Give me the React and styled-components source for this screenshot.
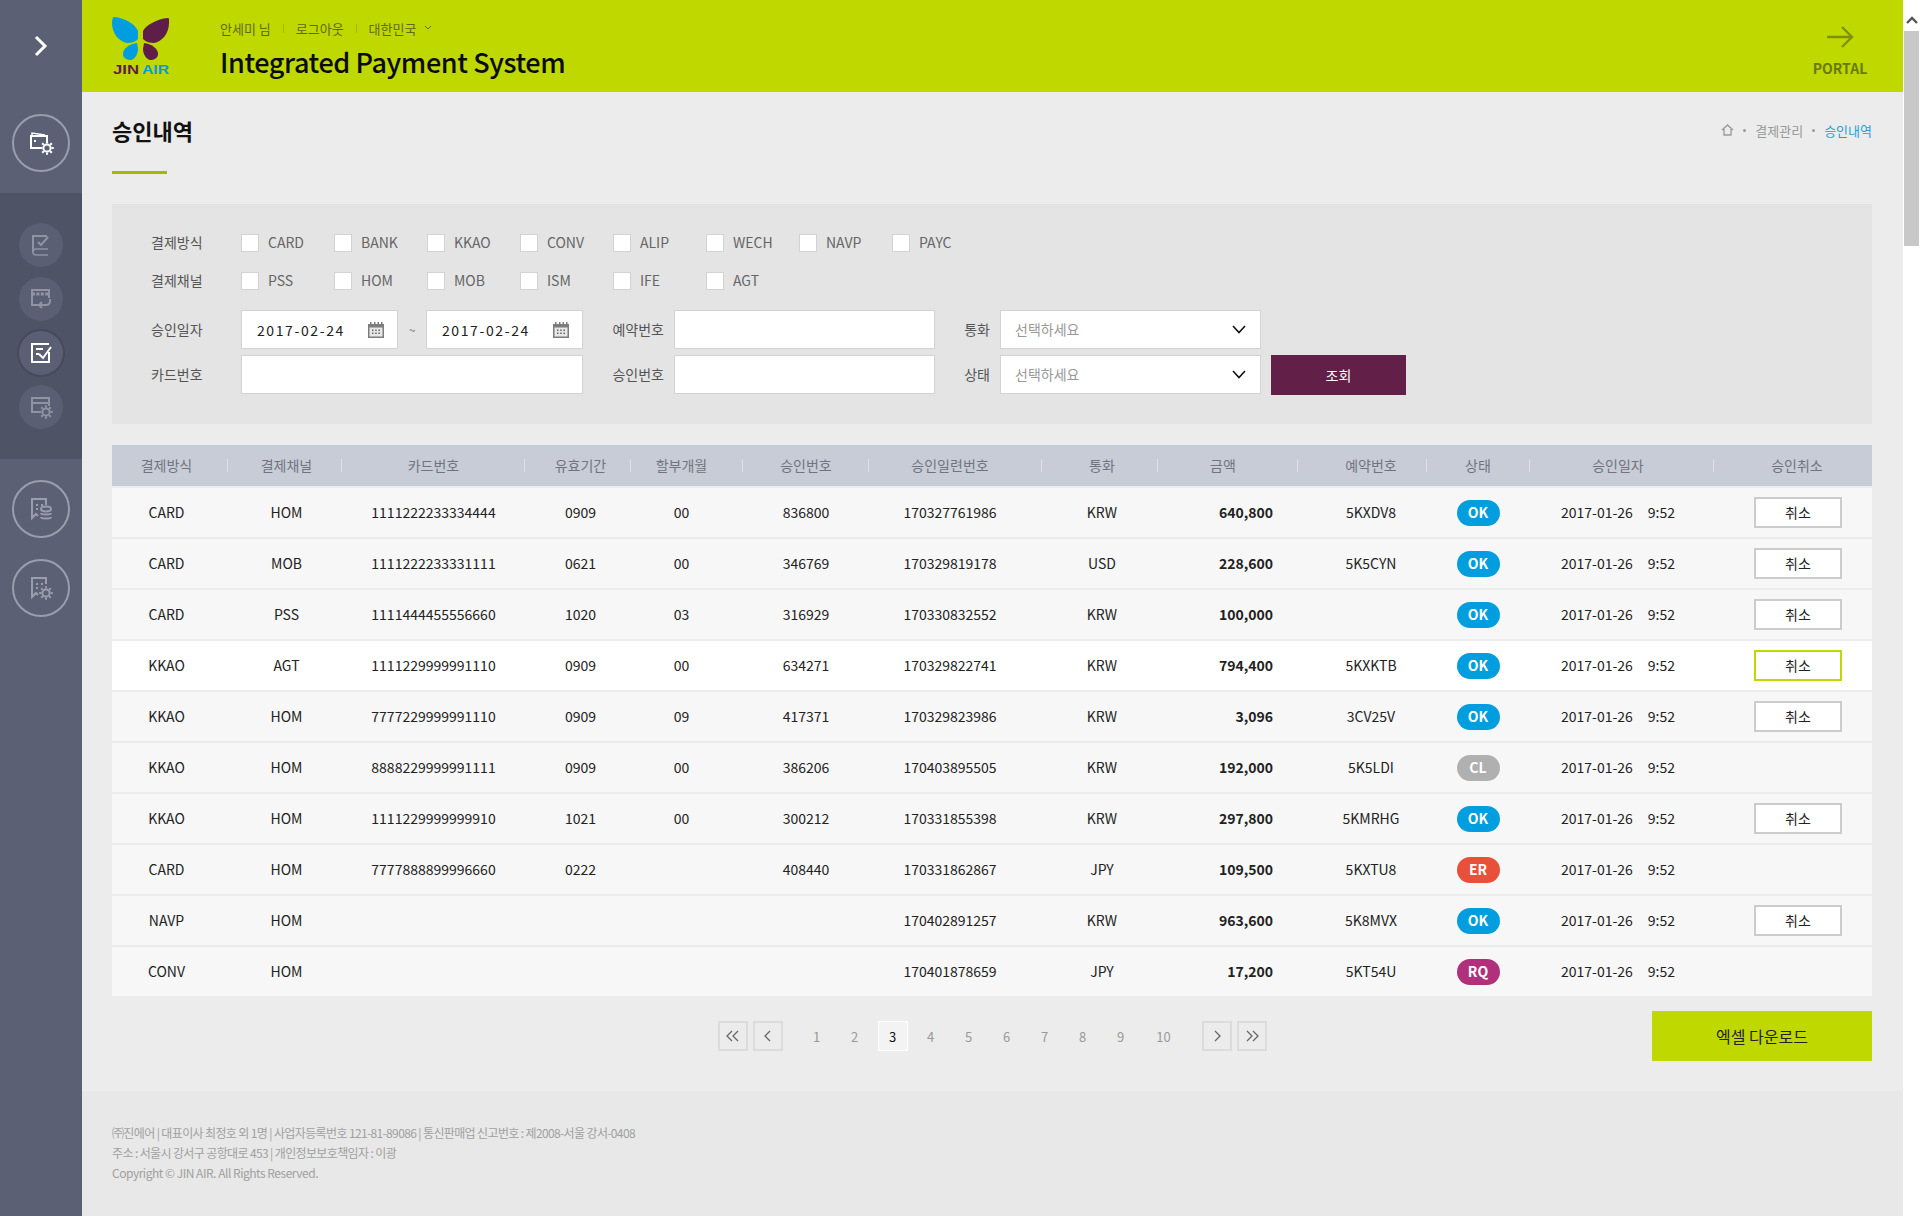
import React from 'react';
import styled, { createGlobalStyle } from 'styled-components';

const GlobalStyle = createGlobalStyle`
  html, body {
    margin: 0;
    padding: 0;
    background: #ececec;
    overflow: hidden;
  }
  * {
    box-sizing: border-box;
  }
  body {
    font-family: "Noto Sans CJK KR", "Noto Sans", sans-serif;
    font-size: 14px;
    color: #222;
  }
`;

const Page = styled.div`
  display: flex;
  width: 1920px;
  height: 1216px;
  overflow: hidden;
`;

/* sidebar */
const Sidebar = styled.aside`
  flex: 0 0 82px;
  display: flex;
  flex-direction: column;
  background: #5b6074;
`;
const SideTop = styled.div`
  height: 193px;
  display: flex;
  flex-direction: column;
  align-items: center;
  padding-top: 32px;
`;
const Toggle = styled.div`
  height: 28px;
  margin-bottom: 54px;
  display: flex;
  align-items: center;
`;
const SideGroup = styled.div`
  height: 266px;
  background: #4f5366;
  display: flex;
  flex-direction: column;
  align-items: center;
  gap: 10px;
  padding-top: 30px;
`;
const SideBottom = styled.div`
  display: flex;
  flex-direction: column;
  align-items: center;
  gap: 21px;
  padding-top: 21px;
`;
const RingIcon = styled.div`
  width: 58px;
  height: 58px;
  border-radius: 50%;
  border: 2px solid #9a9dac;
  display: flex;
  align-items: center;
  justify-content: center;
  color: ${p => (p.$on ? '#fff' : '#9a9dac')};
`;
const DotIcon = styled.div`
  width: 44px;
  height: 44px;
  border-radius: 50%;
  background: #5b5f73;
  box-shadow: ${p => (p.$on ? '0 0 0 2px #464a5c' : 'none')};
  display: flex;
  align-items: center;
  justify-content: center;
  color: ${p => (p.$on ? '#fff' : '#8f93a3')};
`;

/* main column */
const Main = styled.div`
  flex: 1;
  min-width: 0;
  display: flex;
  flex-direction: column;
`;
const Header = styled.header`
  height: 92px;
  background: #bfd800;
  display: flex;
  align-items: flex-start;
  padding: 17px 0 0 29px;
`;
const LogoBox = styled.div`
  width: 80px;
  margin-right: 29px;
`;
const HeadCenter = styled.div`
  flex: 1;
  padding-top: 1px;
`;
const TopLinks = styled.div`
  display: flex;
  align-items: center;
  height: 20px;
  font-size: 13px;
  color: #5f6a10;
`;
const TopDivider = styled.span`
  width: 1px;
  height: 9px;
  background: #a3b800;
  margin: 0 12px;
`;
const Title = styled.h1`
  margin: 6px 0 0;
  font-size: 27px;
  line-height: 36px;
  font-weight: 500;
  color: #0b0b0b;
  letter-spacing: -0.4px;
`;
const Portal = styled.div`
  width: 64px;
  margin: 8px 31px 0 0;
  display: flex;
  flex-direction: column;
  align-items: center;
  font-size: 14px;
  line-height: 18px;
  font-weight: 700;
  color: #6a7a00;
`;
const PortalText = styled.span`
  margin-top: 10px;
`;

const Content = styled.main`
  flex: 1;
  padding: 0 31px 0 30px;
`;
const TitleRow = styled.div`
  height: 112px;
  display: flex;
  justify-content: space-between;
  align-items: flex-start;
  padding-top: 22px;
`;
const PageTitle = styled.div`
  width: 55px;
  height: 60px;
  border-bottom: 3px solid #a5b800;
  font-size: 22px;
  line-height: 32px;
  font-weight: 700;
  color: #111;
  white-space: nowrap;
`;
const Crumbs = styled.div`
  display: flex;
  align-items: center;
  gap: 9px;
  height: 22px;
  margin-top: 5px;
  font-size: 13px;
  color: #999;
`;
const CrumbDot = styled.span`
  width: 3px;
  height: 3px;
  border-radius: 50%;
  background: #999;
`;
const CrumbNow = styled.span`
  color: #1d9fdc;
`;

/* search panel */
const Panel = styled.section`
  height: 220px;
  background: #e4e4e4;
  padding: 30px 0 0 39px;
  display: flex;
  flex-direction: column;
`;
const CheckRow = styled.div`
  display: flex;
  align-items: center;
  height: 18px;
  margin-bottom: 20px;
`;
const FieldLabel = styled.div`
  flex: 0 0 90px;
  grid-column: 1;
  padding-bottom: 2px;
  font-size: 14px;
  color: #555;
`;
const CheckItem = styled.label`
  flex: 0 0 93px;
  display: flex;
  align-items: center;
  font-size: 14px;
  color: #666;
`;
const CheckText = styled.span`
  margin-top: -2px;
`;
const Box = styled.span`
  width: 18px;
  height: 18px;
  background: #fff;
  border: 1px solid #d2d2d2;
  margin-right: 9px;
`;
const FormGrid = styled.div`
  display: grid;
  grid-template-columns: 90px 157px 28px 157px 91px 261px 65px 261px 10px 135px;
  grid-auto-rows: 39px;
  row-gap: 6px;
  align-items: center;
`;
const Input = styled.div`
  grid-column: ${p => p.$col || 'auto'};
  height: 39px;
  background: #fff;
  border: 1px solid #d2d2d2;
  display: flex;
  align-items: center;
  justify-content: space-between;
  padding: 0 ${p => p.$right || 12}px 0 15px;
  font-size: 14px;
  letter-spacing: 1.6px;
  color: #222;
`;
const Placeholder = styled.span`
  font-size: 14px;
  letter-spacing: 0;
  margin: -2px 0 0 -1px;
  color: #999;
`;
const Tilde = styled.div`
  text-align: center;
  font-size: 12px;
  color: #777;
`;
const SideLabel = styled.div`
  padding: 0 10px 2px 0;
  text-align: right;
  font-size: 14px;
  color: #555;
`;
const SearchButton = styled.div`
  grid-column: 10;
  height: 40px;
  margin-top: 1px;
  background: #621f47;
  color: #fff;
  font-size: 14px;
  display: flex;
  align-items: center;
  justify-content: center;
`;

/* table */
const TRACKS = '109px 131px 163px 131px 71px 178px 110px 194px 101px 142px 72px 208px 150px';
const TableHead = styled.div`
  display: grid;
  grid-template-columns: ${TRACKS};
  height: 41px;
  margin-top: 21px;
  background: #c8ccd6;
`;
const HeadCell = styled.div`
  position: relative;
  display: flex;
  align-items: center;
  justify-content: center;
  padding: 0 ${p => p.$pad || 0}px 2px 0;
  font-size: 14px;
  color: #70747f;
  &::after {
    content: ${p => (p.$sep === undefined ? 'none' : '""')};
    position: absolute;
    top: 14px;
    right: ${p => p.$sep}px;
    width: 1px;
    height: 13px;
    background: #dfe1e7;
  }
`;
const Rows = styled.div`
  display: flex;
  flex-direction: column;
  gap: 2px;
  margin-top: 2px;
`;
const Row = styled.div`
  display: grid;
  grid-template-columns: ${TRACKS};
  height: 49px;
  background: ${p => (p.$hover ? '#fff' : '#f7f7f7')};
`;
const Slot = styled.div`
  display: flex;
  align-items: center;
  justify-content: center;
  padding-left: ${p => p.$left || 0}px;
`;
const Cell = styled(Slot)`
  gap: 15px;
  padding-bottom: 2px;
  font-size: 14px;
  color: #222;
`;
const Amount = styled(Cell)`
  justify-content: flex-end;
  padding-right: 27px;
  font-weight: 700;
`;
const Badge = styled.span`
  width: 43px;
  height: 26px;
  padding-bottom: 1px;
  border-radius: 13px;
  background: ${p => p.$bg};
  color: #fff;
  font-size: 14px;
  font-weight: 700;
  display: flex;
  align-items: center;
  justify-content: center;
`;
const CancelButton = styled.div`
  width: 88px;
  height: 31px;
  padding-bottom: 1px;
  background: #fff;
  border: 2px solid ${p => (p.$hover ? '#bfd800' : '#ccc')};
  font-size: 14px;
  color: #222;
  display: flex;
  align-items: center;
  justify-content: center;
`;

/* pagination */
const PagerRow = styled.div`
  display: grid;
  grid-template-columns: 1fr auto 1fr;
  align-items: center;
  margin-top: 15px;
`;
const Pager = styled.div`
  grid-column: 2;
  display: flex;
  align-items: center;
`;
const PageArrow = styled.div`
  width: 30px;
  height: 30px;
  margin-left: ${p => p.$gap || 0}px;
  border: 2px solid #dcdcdc;
  display: flex;
  align-items: center;
  justify-content: center;
  color: #555;
`;
const PageNum = styled.div`
  width: ${p => (p.$wide ? 40 : 30)}px;
  height: 30px;
  margin-left: ${p => p.$gap}px;
  display: flex;
  align-items: center;
  justify-content: center;
  font-size: 13px;
  color: ${p => (p.$on ? '#111' : '#999')};
  background: ${p => (p.$on ? '#f3f3f3' : 'transparent')};
  border: ${p => (p.$on ? '1px solid #fff' : 'none')};
`;
const ExcelButton = styled.div`
  justify-self: end;
  width: 220px;
  height: 50px;
  padding-bottom: 1px;
  background: #bfd800;
  color: #222;
  font-size: 16px;
  display: flex;
  align-items: center;
  justify-content: center;
`;

/* footer */
const Footer = styled.footer`
  height: 125px;
  margin-top: 28px;
  background: #e8e8e8;
  padding: 32px 0 0 30px;
  font-size: 12px;
  line-height: 20px;
  color: #a0a0a0;
  letter-spacing: -0.63px;
`;
const Copyright = styled.div`
  letter-spacing: -0.48px;
`;

/* fake browser scrollbar */
const ScrollTrack = styled.div`
  flex: 0 0 17px;
  background: #fff;
  display: flex;
  flex-direction: column;
  align-items: center;
  padding: 16px 1px 0;
`;
const ScrollThumb = styled.div`
  width: 15px;
  height: 215px;
  margin-top: 7px;
  background: #c8c8c8;
`;

const Icon = ({ children, size = 26, stroke = 2 }) => (
  <svg width={size} height={size} viewBox="0 0 26 26" fill="none" stroke="currentColor" strokeWidth={stroke}>
    {children}
  </svg>
);

const Gear = ({ x, y }) => (
  <g transform={`translate(${x} ${y})`}>
    <circle r="3.6" strokeWidth="2" />
    <path d="M0-6.8V-4.6M0 4.6V6.8M-6.8 0H-4.6M4.6 0H6.8M-4.8-4.8L-3.2-3.2M3.2 3.2L4.8 4.8M-4.8 4.8L-3.2 3.2M3.2-3.2L4.8-4.8" strokeWidth="2" />
  </g>
);

const WalletIcon = () => (
  <Icon>
    <path d="M13 18H3V6H19V12" />
    <path d="M4 6L4 3L17 5" strokeWidth="1.5" />
    <path d="M6 11H8" />
    <Gear x={19} y={18} />
  </Icon>
);
const BookCheckIcon = () => (
  <Icon>
    <path d="M19 4H5V20" />
    <path d="M5 20C5 18 6 17 8 17H20M5 20C5 22 6 23 8 23H20" strokeWidth="1.6" />
    <path d="M10 10L13 13L20 5" />
  </Icon>
);
const ReturnIcon = () => (
  <Icon>
    <path d="M11 19H4V4H21V12" />
    <path d="M4 8H21" strokeWidth="3" strokeDasharray="3 1.4" />
    <path d="M22 13V15C22 18 20 19 18 19H11M14 16L11 19L14 22" />
  </Icon>
);
const CheckListIcon = () => (
  <Icon>
    <path d="M21 12V22H4V4H21" />
    <path d="M8 9H15" />
    <path d="M8 14H11" />
    <path d="M11 14L15 18L23 7" />
  </Icon>
);
const CardGearIcon = () => (
  <Icon>
    <path d="M12 18H4V4H21V12" />
    <path d="M4 9H21" />
    <Gear x={18} y={18} />
  </Icon>
);
const CoinsIcon = () => (
  <Icon>
    <path d="M18 9V3H4V22L8 18L10 20" />
    <path d="M8 9H10M8 13H10" />
    <path d="M13 9H15" />
    <ellipse cx="18" cy="13" rx="5" ry="2.4" />
    <path d="M13 17C13 19 23 19 23 17M13 21C13 23 23 23 23 21" />
  </Icon>
);
const ReceiptGearIcon = () => (
  <Icon>
    <path d="M18 9V3H4V22L8 18L10 20" />
    <path d="M8 9H10M8 13H10M13 9H15" />
    <Gear x={18} y={18} />
  </Icon>
);
const Calendar = () => (
  <svg width="16" height="16" viewBox="0 0 16 16">
    <path d="M0 2H16V16H0Z" fill="#7d7d7d" />
    <path d="M2 0H3.5V3H2ZM6 0H7.5V3H6ZM9.5 0H11V3H9.5ZM13 0H14.5V3H13Z" fill="#7d7d7d" />
    <path d="M1.5 5.5H14.5V14.5H1.5Z" fill="#e8e8e8" />
    <path d="M4 7.5H5.5V9H4ZM7.2 7.5H8.7V9H7.2ZM10.4 7.5H11.9V9H10.4ZM4 10.6H5.5V12.1H4ZM7.2 10.6H8.7V12.1H7.2ZM10.4 10.6H11.9V12.1H10.4Z" fill="#666" />
  </svg>
);
const Caret = () => (
  <svg width="14" height="9" viewBox="0 0 14 9" fill="none" stroke="#111" strokeWidth="1.6">
    <path d="M1 1L7 7.5L13 1" />
  </svg>
);
const PagerIcon = ({ d }) => (
  <svg width="16" height="14" viewBox="0 0 16 14" fill="none" stroke="#666" strokeWidth="1.3">
    <path d={d} />
  </svg>
);

const Logo = () => (
  <svg width="60" height="60" viewBox="0 0 60 60">
    <path d="M3 0C14 1 24 7 27 14L27 22C24 25 20 26 16 26C8 25 1 16 1 6C1 2 2 0 3 0Z" fill="#009ddf" />
    <path d="M57 1C46 2 35 8 32 14L32 22C35 25 39 26 43 26C51 25 58 16 58 6C58 2 58 1 57 1Z" fill="#5f1d4a" />
    <path d="M26 26C19 27 12 31 12 37C12 41 16 43 20 43C24 42 27 37 27 32Z" fill="#009ddf" />
    <path d="M33 26C40 27 47 31 47 37C47 41 43 43 39 43C35 42 32 37 32 32Z" fill="#5f1d4a" />
    <text x="2" y="57" fontFamily="'Liberation Sans', sans-serif" fontSize="12.5" fontWeight="700" fill="#5f1d4a" textLength="26" lengthAdjust="spacingAndGlyphs">JIN</text>
    <text x="31" y="57" fontFamily="'Liberation Sans', sans-serif" fontSize="12.5" fontWeight="700" fill="#009ddf" textLength="27" lengthAdjust="spacingAndGlyphs">AIR</text>
  </svg>
);

const methods = ['CARD', 'BANK', 'KKAO', 'CONV', 'ALIP', 'WECH', 'NAVP', 'PAYC'];
const channels = ['PSS', 'HOM', 'MOB', 'ISM', 'IFE', 'AGT'];

const columns = [
  { label: '결제방식', sep: -7 },
  { label: '결제채널', sep: 10 },
  { label: '카드번호', sep: -10 },
  { label: '유효기간', sep: 15 },
  { label: '할부개월', sep: -26 },
  { label: '승인번호', sep: 26 },
  { label: '승인일련번호', sep: -37 },
  { label: '통화', sep: 41 },
  { label: '금액', sep: 2, pad: 53 },
  { label: '예약번호', sep: 15 },
  { label: '상태', sep: -16 },
  { label: '승인일자', sep: 8 },
  { label: '승인취소' },
];

const badgeColors = { OK: '#009ddf', CL: '#b0b0b0', ER: '#e8503a', RQ: '#b0307c' };

const rows = [
  ['CARD', 'HOM', '1111222233334444', '0909', '00', '836800', '170327761986', 'KRW', '640,800', '5KXDV8', 'OK', true],
  ['CARD', 'MOB', '1111222233331111', '0621', '00', '346769', '170329819178', 'USD', '228,600', '5K5CYN', 'OK', true],
  ['CARD', 'PSS', '1111444455556660', '1020', '03', '316929', '170330832552', 'KRW', '100,000', '', 'OK', true],
  ['KKAO', 'AGT', '1111229999991110', '0909', '00', '634271', '170329822741', 'KRW', '794,400', '5KXKTB', 'OK', true],
  ['KKAO', 'HOM', '7777229999991110', '0909', '09', '417371', '170329823986', 'KRW', '3,096', '3CV25V', 'OK', true],
  ['KKAO', 'HOM', '8888229999991111', '0909', '00', '386206', '170403895505', 'KRW', '192,000', '5K5LDI', 'CL', false],
  ['KKAO', 'HOM', '1111229999999910', '1021', '00', '300212', '170331855398', 'KRW', '297,800', '5KMRHG', 'OK', true],
  ['CARD', 'HOM', '7777888899996660', '0222', '', '408440', '170331862867', 'JPY', '109,500', '5KXTU8', 'ER', false],
  ['NAVP', 'HOM', '', '', '', '', '170402891257', 'KRW', '963,600', '5K8MVX', 'OK', true],
  ['CONV', 'HOM', '', '', '', '', '170401878659', 'JPY', '17,200', '5KT54U', 'RQ', false],
];

const pages = ['1', '2', '3', '4', '5', '6', '7', '8', '9', '10'];

const App = () => (
  <Page>
    <GlobalStyle />
    <Sidebar>
      <SideTop>
        <Toggle>
          <svg width="14" height="22" viewBox="0 0 14 22" fill="none" stroke="#fff" strokeWidth="3">
            <path d="M2 2L11 11L2 20" />
          </svg>
        </Toggle>
        <RingIcon $on><WalletIcon /></RingIcon>
      </SideTop>
      <SideGroup>
        <DotIcon><BookCheckIcon /></DotIcon>
        <DotIcon><ReturnIcon /></DotIcon>
        <DotIcon $on><CheckListIcon /></DotIcon>
        <DotIcon><CardGearIcon /></DotIcon>
      </SideGroup>
      <SideBottom>
        <RingIcon><CoinsIcon /></RingIcon>
        <RingIcon><ReceiptGearIcon /></RingIcon>
      </SideBottom>
    </Sidebar>

    <Main>
      <Header>
        <LogoBox><Logo /></LogoBox>
        <HeadCenter>
          <TopLinks>
            <span>안세미 님</span>
            <TopDivider />
            <span>로그아웃</span>
            <TopDivider />
            <span>대한민국</span>
            <svg width="8" height="6" viewBox="0 0 8 6" fill="none" stroke="#5f6a10" style={{ marginLeft: 8 }}>
              <path d="M1 1L4 4L7 1" />
            </svg>
          </TopLinks>
          <Title>Integrated Payment System</Title>
        </HeadCenter>
        <Portal>
          <svg width="28" height="24" viewBox="0 0 28 24" fill="none" stroke="#7f9000" strokeWidth="2.4">
            <path d="M1 12H26M16 2L26 12L16 22" />
          </svg>
          <PortalText>PORTAL</PortalText>
        </Portal>
      </Header>

      <Content>
        <TitleRow>
          <PageTitle>승인내역</PageTitle>
          <Crumbs>
            <svg width="13" height="12" viewBox="0 0 13 12" fill="none" stroke="#999" strokeWidth="1.3">
              <path d="M1 6L6.5 1L12 6M3 5V11H10V5" />
            </svg>
            <CrumbDot />
            <span>결제관리</span>
            <CrumbDot />
            <CrumbNow>승인내역</CrumbNow>
          </Crumbs>
        </TitleRow>

        <Panel>
          <CheckRow>
            <FieldLabel>결제방식</FieldLabel>
            {methods.map(m => <CheckItem key={m}><Box /><CheckText>{m}</CheckText></CheckItem>)}
          </CheckRow>
          <CheckRow>
            <FieldLabel>결제채널</FieldLabel>
            {channels.map(m => <CheckItem key={m}><Box /><CheckText>{m}</CheckText></CheckItem>)}
          </CheckRow>
          <FormGrid>
            <FieldLabel>승인일자</FieldLabel>
            <Input $right={13}>2017-02-24<Calendar /></Input>
            <Tilde>~</Tilde>
            <Input $right={13}>2017-02-24<Calendar /></Input>
            <SideLabel>예약번호</SideLabel>
            <Input />
            <SideLabel>통화</SideLabel>
            <Input $right={14}><Placeholder>선택하세요</Placeholder><Caret /></Input>

            <FieldLabel>카드번호</FieldLabel>
            <Input $col="2 / 5" />
            <SideLabel>승인번호</SideLabel>
            <Input />
            <SideLabel>상태</SideLabel>
            <Input $right={14}><Placeholder>선택하세요</Placeholder><Caret /></Input>
            <SearchButton>조회</SearchButton>
          </FormGrid>
        </Panel>

        <TableHead>
          {columns.map(c => <HeadCell key={c.label} $sep={c.sep} $pad={c.pad}>{c.label}</HeadCell>)}
        </TableHead>
        <Rows>
          {rows.map((r, i) => (
            <Row key={r[6]} $hover={i === 3}>
              {r.slice(0, 8).map((v, j) => <Cell key={j}>{v}</Cell>)}
              <Amount>{r[8]}</Amount>
              <Cell>{r[9]}</Cell>
              <Slot><Badge $bg={badgeColors[r[10]]}>{r[10]}</Badge></Slot>
              <Cell><span>2017-01-26</span><span>9:52</span></Cell>
              <Slot $left={2}>{r[11] && <CancelButton $hover={i === 3}>취소</CancelButton>}</Slot>
            </Row>
          ))}
        </Rows>

        <PagerRow>
          <Pager>
            <PageArrow><PagerIcon d="M7 2L2 7L7 12M13 2L8 7L13 12" /></PageArrow>
            <PageArrow $gap={5}><PagerIcon d="M10 2L5 7L10 12" /></PageArrow>
            {pages.map((n, i) => (
              <PageNum key={n} $gap={i === 0 ? 19 : 8} $wide={n === '10'} $on={n === '3'}>{n}</PageNum>
            ))}
            <PageArrow $gap={18}><PagerIcon d="M6 2L11 7L6 12" /></PageArrow>
            <PageArrow $gap={5}><PagerIcon d="M3 2L8 7L3 12M9 2L14 7L9 12" /></PageArrow>
          </Pager>
          <ExcelButton>엑셀 다운로드</ExcelButton>
        </PagerRow>
      </Content>

      <Footer>
        <div>㈜진에어 | 대표이사 최정호 외 1명 | 사업자등록번호 121-81-89086 | 통신판매업 신고번호 : 제2008-서울 강서-0408</div>
        <div>주소 : 서울시 강서구 공항대로 453 | 개인정보보호책임자 : 이광</div>
        <Copyright>Copyright © JIN AIR. All Rights Reserved.</Copyright>
      </Footer>
    </Main>

    <ScrollTrack>
      <svg width="12" height="8" viewBox="0 0 12 8" fill="none" stroke="#555" strokeWidth="2.4">
        <path d="M1 7L6 2L11 7" />
      </svg>
      <ScrollThumb />
    </ScrollTrack>
  </Page>
);

export default App;
